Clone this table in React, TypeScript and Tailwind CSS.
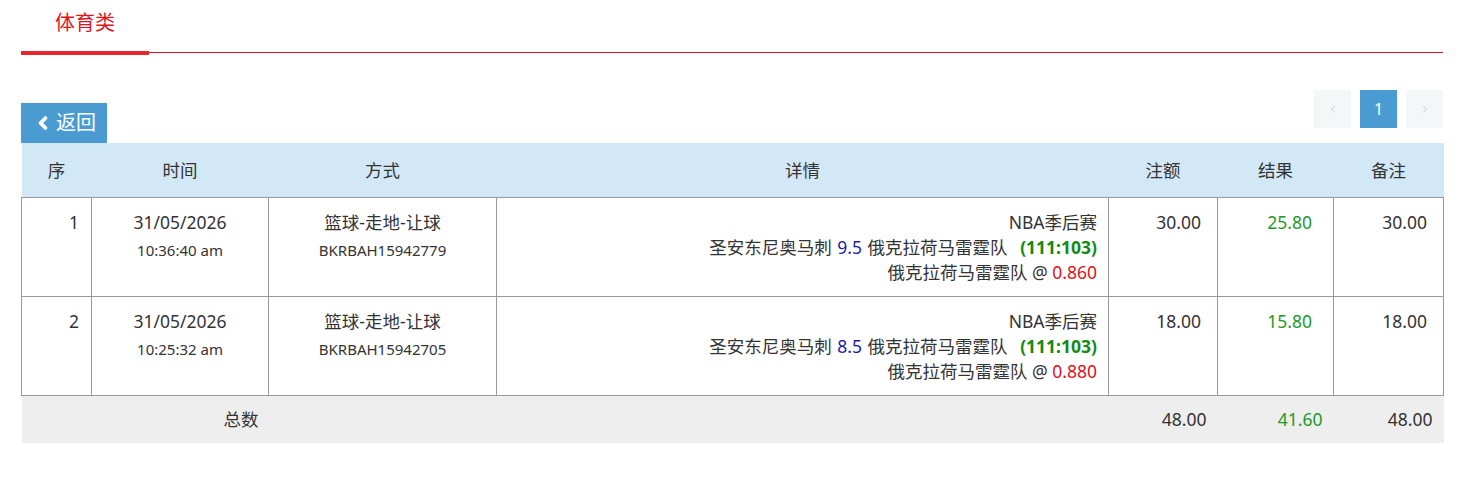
import { ChevronLeft, ChevronRight } from "lucide-react";

type Row = {
  seq: number;
  date: string;
  time: string;
  type: string;
  code: string;
  line: number;
  odds: string;
  amount: string;
  result: string;
  note: string;
};

const rows: Row[] = [
  {
    seq: 1,
    date: "31/05/2026",
    time: "10:36:40 am",
    type: "篮球-走地-让球",
    code: "BKRBAH15942779",
    line: 9.5,
    odds: "0.860",
    amount: "30.00",
    result: "25.80",
    note: "30.00",
  },
  {
    seq: 2,
    date: "31/05/2026",
    time: "10:25:32 am",
    type: "篮球-走地-让球",
    code: "BKRBAH15942705",
    line: 8.5,
    odds: "0.880",
    amount: "18.00",
    result: "15.80",
    note: "18.00",
  },
];

const font = { fontFamily: '"Noto Sans", "Noto Sans CJK SC", sans-serif' };

const App = () => {
  return (
    <div className="w-[1457px] h-[491px] bg-white text-[#333]" style={font}>
      <div className="pl-[21px] pr-[14px] pt-[10px]">
        <div className="relative border-b border-[#e0141e] h-[43px]">
          <div className="absolute left-0 bottom-[-3px] w-[128px] h-[4px] bg-[#e5262c]" />
          <div className="pl-[34px] text-[20px] leading-[26px] text-[#e0141e]">体育类</div>
        </div>

        <div className="flex items-end justify-between mt-[37px]">
          <button className="flex items-center gap-[3px] h-[40px] w-[86px] pl-[12px] bg-[#4a9bd1] text-white text-[20px] leading-none">
            <ChevronLeft size={20} strokeWidth={4.5} />
            <span>返回</span>
          </button>
          <div className="flex gap-[9px] mb-[15px]">
            <div className="w-[37px] h-[38px] bg-[#f5f6f7] flex items-center justify-center text-[#bbb]">
              <ChevronLeft size={12} strokeWidth={1.5} />
            </div>
            <div className="w-[37px] h-[38px] bg-[#4a9bd1] flex items-center justify-center text-white text-[16px]">
              1
            </div>
            <div className="w-[37px] h-[38px] bg-[#f5f6f7] flex items-center justify-center text-[#bbb]">
              <ChevronRight size={12} strokeWidth={1.5} />
            </div>
          </div>
        </div>

        <table className="w-full table-fixed border-collapse text-[17.5px]">
          <colgroup>
            <col className="w-[70px]" />
            <col className="w-[177px]" />
            <col className="w-[228px]" />
            <col className="w-[612px]" />
            <col className="w-[109px]" />
            <col className="w-[116px]" />
            <col className="w-[110px]" />
          </colgroup>
          <thead>
            <tr className="h-[54px] bg-[#d3e8f7] text-[17.5px]">
              <th className="font-normal">序</th>
              <th className="font-normal">时间</th>
              <th className="font-normal">方式</th>
              <th className="font-normal">详情</th>
              <th className="font-normal">注额</th>
              <th className="font-normal">结果</th>
              <th className="font-normal">备注</th>
            </tr>
          </thead>
          <tbody>
            {rows.map((r) => (
              <tr key={r.seq} className="h-[99px] align-top">
                <td className="border border-[#999] text-right pr-[12px] pt-[12px] leading-[25px]">{r.seq}</td>
                <td className="border border-[#999] text-center pt-[12px]">
                  <div className="leading-[25px]">{r.date}</div>
                  <div className="text-[15px] leading-[30px]">{r.time}</div>
                </td>
                <td className="border border-[#999] text-center pt-[12px]">
                  <div className="leading-[25px]">{r.type}</div>
                  <div className="text-[15px] leading-[30px]">{r.code}</div>
                </td>
                <td className="border border-[#999] text-right pr-[11px] pt-[12px] leading-[25px]">
                  <div>NBA季后赛</div>
                  <div>
                    圣安东尼奥马刺 <span className="text-[#1c1ca8] mx-[1px]">{r.line}</span> 俄克拉荷马雷霆队{" "}
                    <b className="text-[#138a13] ml-[8px]">(111:103)</b>
                  </div>
                  <div>
                    俄克拉荷马雷霆队 @ <span className="text-[#e0101c]">{r.odds}</span>
                  </div>
                </td>
                <td className="border border-[#999] text-right pr-[16px] pt-[12px] leading-[25px]">{r.amount}</td>
                <td className="border border-[#999] text-right pr-[21px] pt-[12px] leading-[25px] text-[#229a2a]">
                  {r.result}
                </td>
                <td className="border border-[#999] text-right pr-[16px] pt-[12px] leading-[25px]">{r.note}</td>
              </tr>
            ))}
            <tr className="h-[48px] bg-[#eeeeee]">
              <td colSpan={3} className="text-center pr-[36px]">
                总数
              </td>
              <td />
              <td className="text-right pr-[11px]">48.00</td>
              <td className="text-right pr-[11px] text-[#229a2a]">41.60</td>
              <td className="text-right pr-[11px]">48.00</td>
            </tr>
          </tbody>
        </table>
      </div>
    </div>
  );
};

export default App;
